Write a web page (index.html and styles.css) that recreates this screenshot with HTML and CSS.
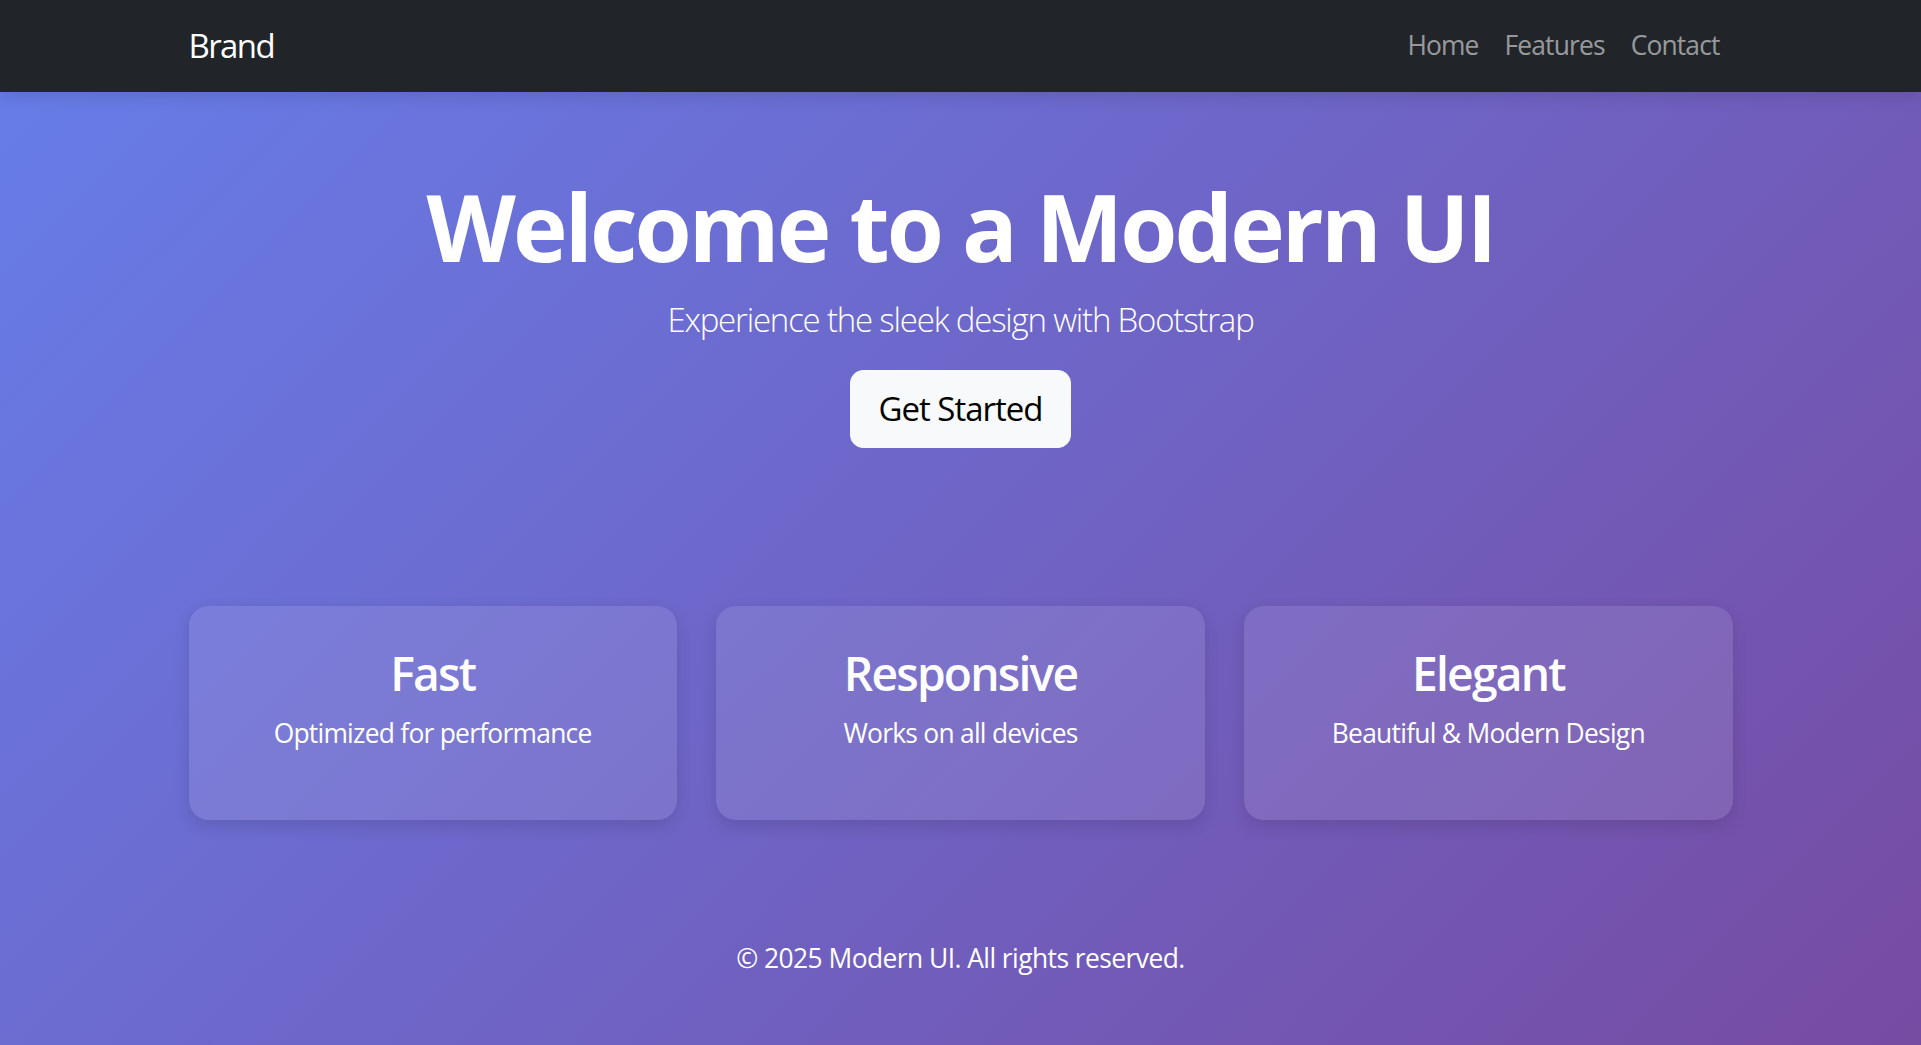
FILE: index.html
```html
<!DOCTYPE html>
<html lang="en">
<head>
<meta charset="utf-8">
<title>Modern UI</title>
<link rel="stylesheet" href="styles.css">
</head>
<body>
<div class="page">
  <nav class="navbar">
    <div class="container nav-inner">
      <a class="brand" href="#">Brand</a>
      <ul class="nav-links">
        <li><a href="#">Home</a></li>
        <li><a href="#">Features</a></li>
        <li><a href="#">Contact</a></li>
      </ul>
    </div>
  </nav>

  <header class="hero">
    <div class="container">
      <h1 class="hero-title">Welcome to a Modern UI</h1>
      <p class="lead">Experience the sleek design with Bootstrap</p>
      <a class="btn-light" href="#">Get Started</a>
    </div>
  </header>

  <section class="container features">
    <div class="feature-card">
      <h3>Fast</h3>
      <p>Optimized for performance</p>
    </div>
    <div class="feature-card">
      <h3>Responsive</h3>
      <p>Works on all devices</p>
    </div>
    <div class="feature-card">
      <h3>Elegant</h3>
      <p>Beautiful &amp; Modern Design</p>
    </div>
  </section>

  <footer class="footer">
    <p>© 2025 Modern UI. All rights reserved.</p>
  </footer>
</div>
</body>
</html>
```
FILE: styles.css
```css
* { box-sizing: border-box; }

html, body {
  margin: 0;
  padding: 0;
}

body {
  font-family: "Open Sans", "Noto Sans", sans-serif;
  color: #fff;
}

.page {
  min-height: 100vh;
  background: linear-gradient(135deg, #667eea 0%, #764ba2 100%);
}

.container {
  width: 1584px;
  margin: 0 auto;
  padding: 0 20px;
}

.navbar {
  background: #212529;
  height: 92px;
  display: flex;
  align-items: center;
  box-shadow: 0 4px 16px rgba(0, 0, 0, 0.12);
  position: relative;
}

.nav-inner {
  display: flex;
  align-items: center;
  justify-content: space-between;
}

.brand {
  color: #fff;
  text-decoration: none;
  font-size: 33px;
  line-height: 1.5;
  letter-spacing: -1.6px;
}

.nav-links {
  list-style: none;
  margin: 0;
  padding: 0;
  display: flex;
}

.nav-links a {
  display: block;
  padding: 0 13px;
  font-size: 26.4px;
  line-height: 1.5;
  letter-spacing: -0.85px;
  color: rgba(255, 255, 255, 0.55);
  text-decoration: none;
}

.hero {
  text-align: center;
  padding: 79px 0;
}

.hero-title {
  font-size: 92.4px;
  font-weight: 700;
  line-height: 1.2;
  letter-spacing: -2.9px;
  margin: 0 0 13px;
}

.lead {
  font-size: 33px;
  font-weight: 300;
  line-height: 1.5;
  letter-spacing: -1.2px;
  margin: 0 0 26px;
}

.btn-light {
  display: inline-block;
  background: #f8f9fa;
  color: #000;
  border: 1.65px solid #f8f9fa;
  border-radius: 13px;
  font-size: 33px;
  line-height: 1.5;
  letter-spacing: -1px;
  padding: 13px 27px;
  text-decoration: none;
}

.features {
  margin-top: 79px;
  display: grid;
  grid-template-columns: repeat(3, 1fr);
  column-gap: 39.6px;
}

.feature-card {
  background: rgba(255, 255, 255, 0.1);
  border-radius: 20px;
  padding: 40px;
  text-align: center;
  box-shadow: 0 6px 16px rgba(0, 0, 0, 0.12);
}

.feature-card h3 {
  font-size: 46.2px;
  font-weight: 600;
  line-height: 1.2;
  letter-spacing: -1.8px;
  margin: 0 0 13px;
}

.feature-card p {
  font-size: 26.4px;
  line-height: 1.5;
  letter-spacing: -0.74px;
  margin: 0 0 26px;
}

.footer {
  margin-top: 79px;
  padding: 40px 0;
  text-align: center;
}

.footer p {
  margin: 0;
  font-size: 26.4px;
  line-height: 1.5;
  letter-spacing: -0.55px;
}
```
